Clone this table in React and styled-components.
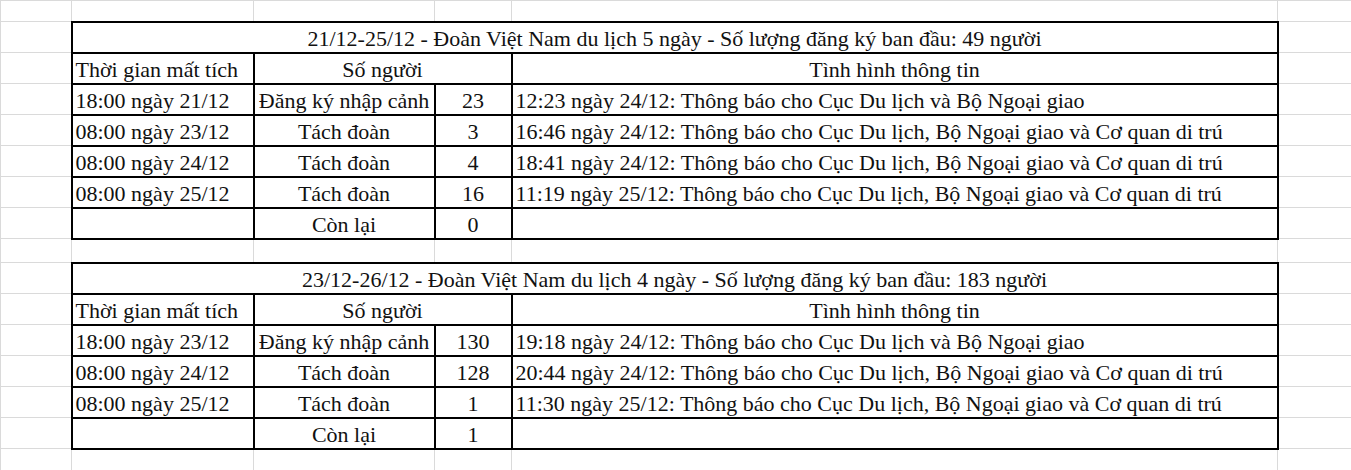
import React from "react";
import styled, { createGlobalStyle } from "styled-components";

const GRID = "#dadada";
const INK = "#111";

const GlobalStyle = createGlobalStyle`
    html, body {
        margin: 0;
        padding: 0;
        background: #fff;
        overflow: hidden;
    }
`

const Sheet = styled.table`
    border-collapse: collapse;
    table-layout: fixed;
    width: 1351px;
    font-family: "Liberation Serif", "Times New Roman", serif;
    font-size: 22px;
    color: ${INK};
`

const Row = styled.tr`
    height: ${props => props.$h}px;
`

const GridCell = styled.td`
    border: 1px solid ${GRID};
    padding: 0;
`

const Cell = styled.td`
    border: 2px solid #000;
    padding: 0 3px 1px 3px;
    text-align: ${props => props.$align || "left"};
    vertical-align: bottom;
    white-space: nowrap;
    overflow: hidden;
    line-height: 25px;
`

const COLUMNS = [71, 182, 181, 77, 766, 74];

const TOURS = [
    {
        title: "21/12-25/12 - Đoàn Việt Nam du lịch 5 ngày - Số lượng đăng ký ban đầu: 49 người",
        rows: [
            ["18:00 ngày 21/12", "Đăng ký nhập cảnh", "23", "12:23 ngày 24/12: Thông báo cho Cục Du lịch và Bộ Ngoại giao"],
            ["08:00 ngày 23/12", "Tách đoàn", "3", "16:46 ngày 24/12: Thông báo cho Cục Du lịch, Bộ Ngoại giao và Cơ quan di trú"],
            ["08:00 ngày 24/12", "Tách đoàn", "4", "18:41 ngày 24/12: Thông báo cho Cục Du lịch, Bộ Ngoại giao và Cơ quan di trú"],
            ["08:00 ngày 25/12", "Tách đoàn", "16", "11:19 ngày 25/12: Thông báo cho Cục Du lịch, Bộ Ngoại giao và Cơ quan di trú"],
        ],
        left: "0",
    },
    {
        title: "23/12-26/12 - Đoàn Việt Nam du lịch 4 ngày - Số lượng đăng ký ban đầu: 183 người",
        rows: [
            ["18:00 ngày 23/12", "Đăng ký nhập cảnh", "130", "19:18 ngày 24/12: Thông báo cho Cục Du lịch và Bộ Ngoại giao"],
            ["08:00 ngày 24/12", "Tách đoàn", "128", "20:44 ngày 24/12: Thông báo cho Cục Du lịch, Bộ Ngoại giao và Cơ quan di trú"],
            ["08:00 ngày 25/12", "Tách đoàn", "1", "11:30 ngày 25/12: Thông báo cho Cục Du lịch, Bộ Ngoại giao và Cơ quan di trú"],
        ],
        left: "1",
    },
];

function BlankRow({ h }) {
    return (
        <Row $h={h}>
            {COLUMNS.map((_, i) => <GridCell key={i} />)}
        </Row>
    );
}

function TourBlock({ tour }) {
    return (
        <>
            <Row $h={31}>
                <GridCell />
                <Cell colSpan={4} $align="center">{tour.title}</Cell>
                <GridCell />
            </Row>
            <Row $h={31}>
                <GridCell />
                <Cell>Thời gian mất tích</Cell>
                <Cell colSpan={2} $align="center">Số người</Cell>
                <Cell $align="center">Tình hình thông tin</Cell>
                <GridCell />
            </Row>
            {tour.rows.map((r, i) => (
                <Row $h={31} key={"row-" + i}>
                    <GridCell />
                    <Cell>{r[0]}</Cell>
                    <Cell $align="center">{r[1]}</Cell>
                    <Cell $align="center">{r[2]}</Cell>
                    <Cell>{r[3]}</Cell>
                    <GridCell />
                </Row>
            ))}
            <Row $h={31}>
                <GridCell />
                <Cell />
                <Cell $align="center">Còn lại</Cell>
                <Cell $align="center">{tour.left}</Cell>
                <Cell />
                <GridCell />
            </Row>
        </>
    );
}

export default function App() {
    return (
        <>
            <GlobalStyle />
            <Sheet>
                <colgroup>
                    {COLUMNS.map((w, i) => <col key={i} style={{ width: w }} />)}
                </colgroup>
                <tbody>
                    <BlankRow h={21} />
                    <TourBlock tour={TOURS[0]} />
                    <BlankRow h={24} />
                    <TourBlock tour={TOURS[1]} />
                    <BlankRow h={31} />
                </tbody>
            </Sheet>
        </>
    );
}
